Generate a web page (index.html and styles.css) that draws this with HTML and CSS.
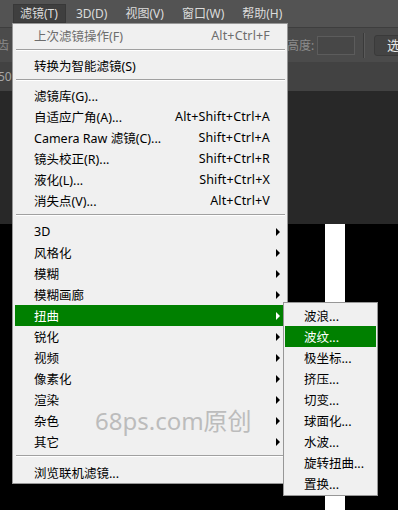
FILE: index.html
```html
<!DOCTYPE html>
<html>
<head>
<meta charset="utf-8">
<link rel="stylesheet" href="styles.css">
</head>
<body>
<div class="app">
  <div class="menubar">
    <span class="mb-item mb-cut">)</span>
    <span class="mb-item mb-active">滤镜(T)</span>
    <span class="mb-item">3D(D)</span>
    <span class="mb-item">视图(V)</span>
    <span class="mb-item">窗口(W)</span>
    <span class="mb-item">帮助(H)</span>
  </div>
  <div class="optbar">
    <span class="opt-cut">齿</span>
    <div class="opt-right">
      <span class="opt-label">高度:</span>
      <span class="opt-input"></span>
      <span class="opt-sep"></span>
      <span class="opt-btn">选择</span>
    </div>
  </div>
  <div class="tabbar"><span class="tab-cut">50</span></div>
  <div class="canvas-dark"></div>
  <div class="canvas-black">
    <div class="blk"></div>
    <div class="wht"></div>
    <div class="blk"></div>
  </div>

  <div class="menu main-menu">
    <div class="item disabled"><span class="label">上次滤镜操作(F)</span><span class="key">Alt+Ctrl+F</span><span class="arr"></span></div>
    <div class="sep sep-s"></div>
    <div class="item"><span class="label">转换为智能滤镜(S)</span><span class="arr"></span></div>
    <div class="sep sep-s"></div>
    <div class="item"><span class="label">滤镜库(G)...</span><span class="arr"></span></div>
    <div class="item"><span class="label">自适应广角(A)...</span><span class="key">Alt+Shift+Ctrl+A</span><span class="arr"></span></div>
    <div class="item"><span class="label">Camera Raw 滤镜(C)...</span><span class="key">Shift+Ctrl+A</span><span class="arr"></span></div>
    <div class="item"><span class="label">镜头校正(R)...</span><span class="key">Shift+Ctrl+R</span><span class="arr"></span></div>
    <div class="item"><span class="label">液化(L)...</span><span class="key">Shift+Ctrl+X</span><span class="arr"></span></div>
    <div class="item"><span class="label">消失点(V)...</span><span class="key">Alt+Ctrl+V</span><span class="arr"></span></div>
    <div class="sep"></div>
    <div class="item"><span class="label">3D</span><span class="arr sub"></span></div>
    <div class="item"><span class="label">风格化</span><span class="arr sub"></span></div>
    <div class="item"><span class="label">模糊</span><span class="arr sub"></span></div>
    <div class="item"><span class="label">模糊画廊</span><span class="arr sub"></span></div>
    <div class="item hl"><span class="label">扭曲</span><span class="arr sub"></span></div>
    <div class="item"><span class="label">锐化</span><span class="arr sub"></span></div>
    <div class="item"><span class="label">视频</span><span class="arr sub"></span></div>
    <div class="item"><span class="label">像素化</span><span class="arr sub"></span></div>
    <div class="item"><span class="label">渲染</span><span class="arr sub"></span></div>
    <div class="item"><span class="label">杂色</span><span class="arr sub"></span></div>
    <div class="item"><span class="label">其它</span><span class="arr sub"></span></div>
    <div class="sep"></div>
    <div class="item"><span class="label">浏览联机滤镜...</span><span class="arr"></span></div>
  </div>

  <div class="menu sub-menu">
    <div class="item"><span class="label">波浪...</span></div>
    <div class="item hl"><span class="label">波纹...</span></div>
    <div class="item"><span class="label">极坐标...</span></div>
    <div class="item"><span class="label">挤压...</span></div>
    <div class="item"><span class="label">切变...</span></div>
    <div class="item"><span class="label">球面化...</span></div>
    <div class="item"><span class="label">水波...</span></div>
    <div class="item"><span class="label">旋转扭曲...</span></div>
    <div class="item"><span class="label">置换...</span></div>
  </div>

  <div class="watermark">68ps.com原创</div>
</div>
</body>
</html>
```

FILE: styles.css
```css
html, body {
  margin: 0;
  padding: 0;
  background: #000;
}
body {
  width: 398px;
  height: 510px;
  overflow: hidden;
  font-family: "Noto Sans", "Noto Sans CJK SC", sans-serif;
}
.app {
  position: relative;
  width: 398px;
  height: 510px;
  overflow: hidden;
  display: flex;
  flex-direction: column;
}

/* menubar */
.menubar {
  background: #535353;
  border-bottom: 1px solid #3e3e3e;
  display: flex;
  align-items: flex-start;
  padding-top: 4px;
  box-sizing: content-box;
  height: 23px;
  font-size: 12px;
  color: #dcdcdc;
  flex-shrink: 0;
}
.mb-item {
  height: 19px;
  line-height: 20px;
  padding: 0 7px;
  margin-right: 4px;
  white-space: nowrap;
}
.mb-cut {
  margin-left: -4px;
  padding: 0;
  width: 17px;
  margin-right: 0;
}
.mb-active {
  background: #3f3f3f;
  box-shadow: inset 0 0 0 1px #383838;
  padding: 0 8px 0 7px;
  margin-right: 3px;
}

/* options bar */
.optbar {
  height: 34px;
  background: #4b4b4b;
  display: flex;
  align-items: center;
  font-size: 12px;
  color: #8c8c8c;
  overflow: hidden;
  flex-shrink: 0;
}
.opt-cut {
  margin-left: -3px;
  width: 13px;
  white-space: nowrap;
}
.opt-right {
  margin-left: 278px;
  display: flex;
  align-items: center;
  flex-shrink: 0;
}
.opt-label {
  width: 30px;
  white-space: nowrap;
}
.opt-input {
  width: 36px;
  height: 17px;
  background: #474747;
  border: 1px solid #5c5c5c;
}
.opt-sep {
  width: 1px;
  height: 25px;
  background: #3a3a3a;
  border-right: 1px solid #5a5a5a;
  margin-left: 8px;
  margin-right: 9px;
}
.opt-btn {
  width: 50px;
  height: 19px;
  line-height: 19px;
  border: 1px solid #3a3a3a;
  border-radius: 3px;
  background: #434343;
  color: #e8e8e8;
  padding-left: 12px;
  font-size: 13px;
  white-space: nowrap;
  flex-shrink: 0;
}

/* tab bar */
.tabbar {
  height: 29px;
  background: #424242;
  display: flex;
  align-items: center;
  font-size: 12px;
  color: #a6a6a6;
  flex-shrink: 0;
}
.tab-cut {
  margin-left: -2px;
}

.canvas-dark {
  height: 133px;
  background: #282828;
  flex-shrink: 0;
}
.canvas-black {
  flex: 1;
  display: grid;
  grid-template-columns: 325px 20px 1fr;
}
.blk { background: #000; }
.wht { background: #fff; }

/* menus */
.menu {
  position: absolute;
  background: #f0f0f0;
  border: 1px solid #979797;
  box-sizing: border-box;
  font-size: 12.5px;
  color: #000;
}
.main-menu {
  left: 12px;
  top: 23px;
  width: 276px;
  padding: 1px 2px 0 2px;
}
.sub-menu {
  left: 283px;
  top: 302px;
  width: 95px;
  padding: 2px 1px 1px 1px;
}
.item {
  height: 21px;
  display: flex;
  align-items: center;
  padding-left: 19px;
  white-space: nowrap;
}
.item .label {
  flex: 1;
}
.item .key {
  text-align: right;
  letter-spacing: 0.15px;
}
.item .arr {
  width: 15px;
  height: 21px;
  position: relative;
  flex-shrink: 0;
}
.item .arr.sub::after {
  content: "";
  position: absolute;
  left: 6px;
  top: 7px;
  border-left: 4px solid #000;
  border-top: 4px solid transparent;
  border-bottom: 4px solid transparent;
}
.item.hl {
  background: #008000;
  color: #fff;
}
.item.hl .arr.sub::after {
  border-left-color: #fff;
}
.item.disabled {
  color: #6d6d6d;
}
.sep {
  height: 10px;
  position: relative;
}
.sep-s {
  height: 9px;
}
.sep::after {
  content: "";
  position: absolute;
  left: 1px;
  right: 0;
  top: 3px;
  height: 1px;
  background: #a0a0a0;
  border-bottom: 1px solid #fff;
}

.watermark {
  position: absolute;
  left: 95px;
  top: 405px;
  font-size: 24px;
  line-height: 32px;
  color: #bcbcbc;
  white-space: nowrap;
  font-family: "Noto Sans", "Noto Sans CJK SC", sans-serif;
}
```
